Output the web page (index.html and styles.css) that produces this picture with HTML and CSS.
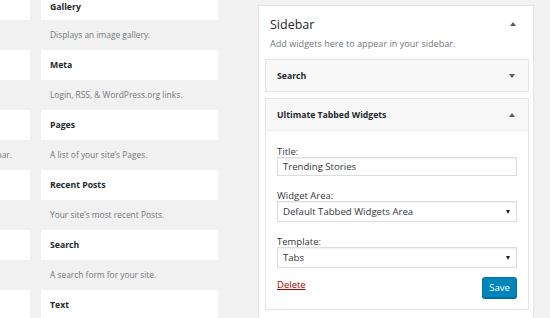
FILE: index.html
```html
<!DOCTYPE html>
<html lang="en">
<head>
    <meta charset="UTF-8">
    <title>Widgets</title>
    <link rel="stylesheet" href="styles.css">
</head>
<body>
    <div id="screen">
        <div class="available">
            <div class="widget-grid">
                <div class="widget"><div class="widget-title"></div><div class="widget-desc"></div></div>
                <div class="widget"><div class="widget-title">Gallery</div><div class="widget-desc">Displays an image gallery.</div></div>
                <div class="widget"><div class="widget-title"></div><div class="widget-desc"></div></div>
                <div class="widget"><div class="widget-title">Meta</div><div class="widget-desc">Login, RSS, &amp; WordPress.org links.</div></div>
                <div class="widget"><div class="widget-title"></div><div class="widget-desc end"><span>Add a navigation menu to your sidebar.</span></div></div>
                <div class="widget"><div class="widget-title">Pages</div><div class="widget-desc">A list of your site’s Pages.</div></div>
                <div class="widget"><div class="widget-title"></div><div class="widget-desc"></div></div>
                <div class="widget"><div class="widget-title">Recent Posts</div><div class="widget-desc">Your site’s most recent Posts.</div></div>
                <div class="widget"><div class="widget-title"></div><div class="widget-desc"></div></div>
                <div class="widget"><div class="widget-title">Search</div><div class="widget-desc">A search form for your site.</div></div>
                <div class="widget"><div class="widget-title"></div><div class="widget-desc"></div></div>
                <div class="widget"><div class="widget-title">Text</div><div class="widget-desc">Arbitrary text.</div></div>
            </div>
        </div>

        <div class="sidebar">
            <div class="sidebar-head">
                <h2>Sidebar</h2>
                <span class="arrow up"></span>
            </div>
            <p class="sidebar-desc">Add widgets here to appear in your sidebar.</p>

            <div class="box">
                <div class="box-head">
                    <span>Search</span>
                    <span class="arrow down"></span>
                </div>
            </div>

            <div class="box open">
                <div class="box-head">
                    <span>Ultimate Tabbed Widgets</span>
                    <span class="arrow up"></span>
                </div>
                <div class="box-body">
                    <label class="field-label">Title:</label>
                    <div class="field">Trending Stories</div>

                    <label class="field-label">Widget Area:</label>
                    <div class="field select">Default Tabbed Widgets Area<span class="caret"></span></div>

                    <label class="field-label">Template:</label>
                    <div class="field select">Tabs<span class="caret"></span></div>

                    <div class="actions">
                        <a href="#" class="delete">Delete</a>
                        <button type="button">Save</button>
                    </div>
                </div>
            </div>
        </div>
    </div>
</body>
</html>
```

FILE: styles.css
```css
body {
    margin: 0;
    padding: 0;
    background-color: #f1f1f1;
    font-family: "Open Sans", sans-serif;
    color: #23282d;
}

#screen {
    width: 550px;
    height: 318px;
    overflow: hidden;
    display: flex;
}

.available {
    width: 258px;
    flex-shrink: 0;
}

.widget-grid {
    display: grid;
    grid-template-columns: 177px 177px;
    column-gap: 11px;
    margin-left: -147px;
    margin-top: -10px;
}

.widget-title {
    height: 30px;
    line-height: 30px;
    background-color: #fff;
    padding-left: 9px;
    font-size: 8.7px;
    font-weight: bold;
    white-space: nowrap;
}

.widget:first-child .widget-title,
.widget:nth-child(2) .widget-title {
    line-height: 34px;
}

.widget-desc {
    height: 30px;
    line-height: 30px;
    padding-left: 9px;
    font-size: 8.4px;
    color: #72777c;
    white-space: nowrap;
}

.widget-desc.end {
    display: flex;
    justify-content: flex-end;
    padding-right: 18px;
}

.sidebar {
    margin-top: 5px;
    background-color: #fff;
    border: 1px solid #e5e5e5;
    border-bottom: none;
    padding: 0 4px 0 6px;
    box-sizing: border-box;
    width: 276px;
    height: 320px;
}

.sidebar-head {
    display: flex;
    justify-content: space-between;
    align-items: center;
    height: 26px;
    padding: 5px 13px 0 5px;
}

.sidebar-head h2 {
    margin: 0;
    font-size: 12.5px;
    font-weight: normal;
}

.sidebar-desc {
    margin: 0 0 4px 5px;
    height: 18px;
    line-height: 14px;
    font-size: 9.1px;
    color: #72777c;
}

.arrow {
    width: 0;
    height: 0;
    border-left: 3px solid transparent;
    border-right: 3px solid transparent;
}

.arrow.up {
    border-bottom: 4px solid #555d66;
}

.arrow.down {
    border-top: 4px solid #555d66;
}

.box {
    border: 1px solid #e5e5e5;
    margin-bottom: 6px;
}

.box-head {
    display: flex;
    justify-content: space-between;
    align-items: center;
    height: 31px;
    padding: 0 13px 0 11px;
    background-color: #f8f8f8;
    font-size: 8.7px;
    font-weight: bold;
}

.box.open .box-head {
    border-bottom: 1px solid #eee;
}

.box-body {
    padding: 15px 11px 11px 11px;
    font-size: 9.5px;
}

.field-label {
    display: block;
    color: #32373c;
    line-height: 11px;
}

.field {
    position: relative;
    height: 19px;
    line-height: 17px;
    border: 1px solid #ddd;
    box-shadow: inset 0 1px 2px rgba(0, 0, 0, 0.07);
    padding: 0 5px;
    font-size: 9.6px;
    color: #32373c;
    margin-bottom: 14px;
    box-sizing: border-box;
}

.field.select {
    height: 21px;
    line-height: 19px;
}

.caret {
    position: absolute;
    right: 6px;
    top: 8px;
    border-left: 2.5px solid transparent;
    border-right: 2.5px solid transparent;
    border-top: 4px solid #222;
}

.actions {
    display: flex;
    justify-content: space-between;
    align-items: flex-start;
    margin-top: -5px;
}

.delete {
    color: #a00;
    font-size: 9.5px;
    line-height: 16px;
    text-decoration: underline;
}

button {
    background-color: #0085ba;
    border: 1px solid #0073aa;
    border-radius: 3px;
    color: #fff;
    font-family: "Open Sans", sans-serif;
    font-size: 9.5px;
    width: 35px;
    height: 21px;
    padding: 0;
    box-shadow: 0 1px 0 #006799;
}
```
